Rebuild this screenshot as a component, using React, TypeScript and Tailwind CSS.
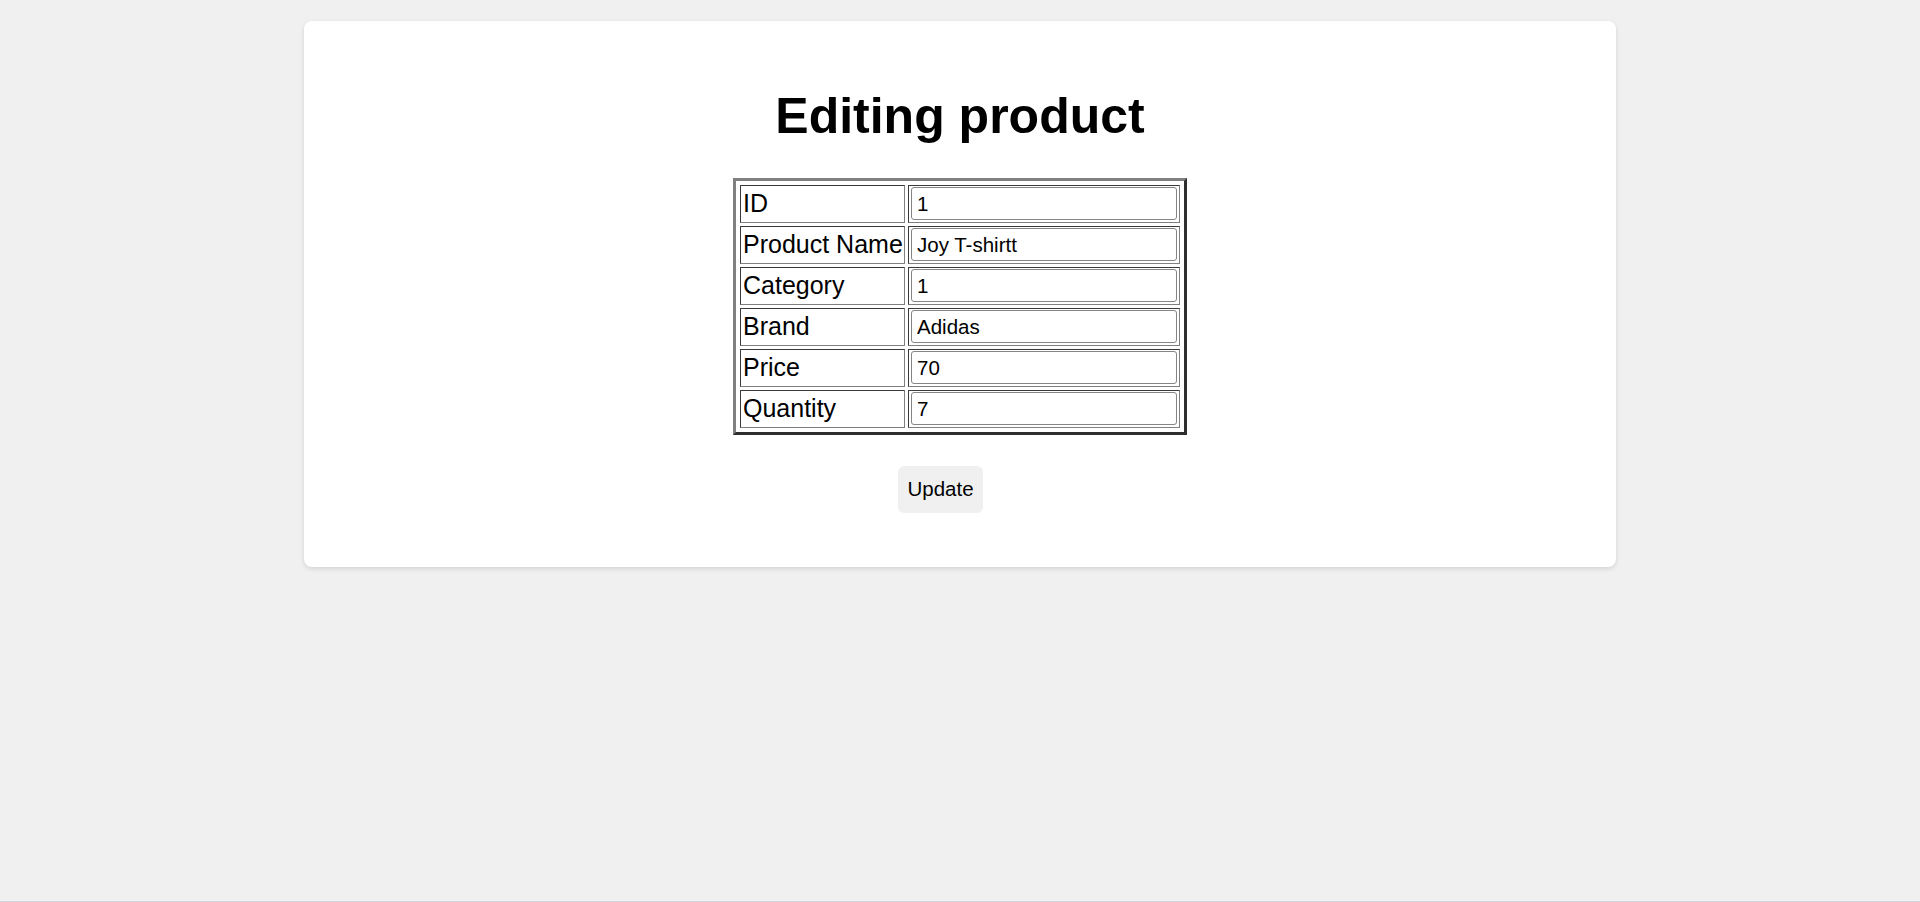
const ROWS: { label: string; value: string }[] = [
  { label: "ID", value: "1" },
  { label: "Product Name", value: "Joy T-shirtt" },
  { label: "Category", value: "1" },
  { label: "Brand", value: "Adidas" },
  { label: "Price", value: "70" },
  { label: "Quantity", value: "7" },
];

export default function App() {
  return (
    <div className="flex h-[902px] flex-col items-center border-b border-[#d3d6dc] bg-[#f0f0f0] pt-[21px] font-['Liberation_Sans',Arial,sans-serif] text-black">
      <div className="flex h-[546px] w-[1312px] flex-col items-center rounded-lg bg-white pt-[67px] shadow-[0_2px_5px_rgba(0,0,0,0.12)]">
        <h1 className="text-[50px] font-bold leading-[1.15]">Editing product</h1>

        <table className="mt-[32px] border-separate border-spacing-[3px] border-[3px] border-t-[#808080] border-l-[#808080] border-r-[#2e2e2e] border-b-[#2e2e2e] p-[1px]">
          <tbody>
            {ROWS.map((row) => (
              <tr key={row.label}>
                <td className="h-[38px] w-[165px] border border-t-[#3a3a3a] border-l-[#3a3a3a] border-r-[#808080] border-b-[#808080] py-[1px] pr-[1px] pl-[2px] align-middle text-[25px] leading-[1.15] whitespace-nowrap">
                  {row.label}
                </td>
                <td className="h-[38px] w-[272px] border border-t-[#3a3a3a] border-l-[#3a3a3a] border-r-[#808080] border-b-[#808080] px-[2px] py-[1px] align-middle">
                  <input
                    type="text"
                    defaultValue={row.value}
                    className="block h-[33px] w-full rounded-[3px] border border-[#858585] bg-white px-[5px] text-[20.5px] text-black outline-none"
                  />
                </td>
              </tr>
            ))}
          </tbody>
        </table>

        <div className="mt-[31px] flex w-full justify-center">
          <button
            type="button"
            className="mr-[39px] h-[47px] w-[85px] rounded-md bg-[#f0f0f0] text-[20.5px] text-black"
          >
            Update
          </button>
        </div>
      </div>
    </div>
  );
}
